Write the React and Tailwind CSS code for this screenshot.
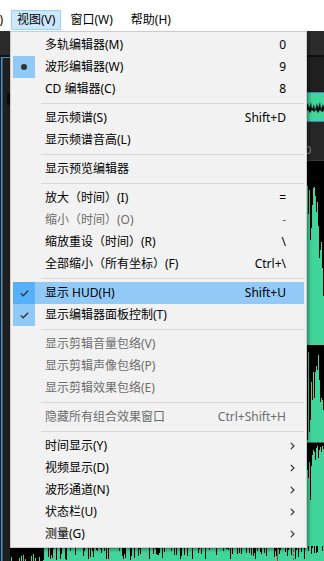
import React from "react";

// ----------------------------------------------------------------------
// menu data

const ROWS = [
  { label: "多轨编辑器(M)", keys: "0" },
  { label: "波形编辑器(W)", keys: "9", mark: "dot" },
  { label: "CD 编辑器(C)", keys: "8" },
  "sep",
  { label: "显示频谱(S)", keys: "Shift+D" },
  { label: "显示频谱音高(L)" },
  "sep",
  { label: "显示预览编辑器" },
  "sep",
  { label: "放大（时间）(I)", keys: "=" },
  { label: "缩小（时间）(O)", keys: "-", disabled: true },
  { label: "缩放重设（时间）(R)", keys: "\\" },
  { label: "全部缩小（所有坐标）(F)", keys: "Ctrl+\\" },
  "sep",
  { label: "显示 HUD(H)", keys: "Shift+U", mark: "check", active: true },
  { label: "显示编辑器面板控制(T)", mark: "check" },
  "sep",
  { label: "显示剪辑音量包络(V)", disabled: true },
  { label: "显示剪辑声像包络(P)", disabled: true },
  { label: "显示剪辑效果包络(E)", disabled: true },
  "sep",
  { label: "隐藏所有组合效果窗口", keys: "Ctrl+Shift+H", disabled: true },
  "sep",
  { label: "时间显示(Y)", sub: true },
  { label: "视频显示(D)", sub: true },
  { label: "波形通道(N)", sub: true },
  { label: "状态栏(U)", sub: true },
  { label: "测量(G)", sub: true },
];

const GREEN = "#41d59c";

function rng(seed) {
  let s = seed;
  return () => {
    s = (s * 16807) % 2147483647;
    return (s - 1) / 2147483646;
  };
}

// waveform bits visible around the menu
const UPPER_TOP = [200, 186, 214, 190, 240, 228, 205, 188, 187, 196, 212, 202, 226, 258, 250, 242, 268, 296];
const MID_TOP = [448, 440, 352, 432, 420, 382, 400, 372, 398, 372, 366, 370, 355, 380, 402, 398, 400, 410];
const LOW_TOP = [490, 470, 478, 462, 500, 466, 455, 450, 452, 460, 448, 446, 458, 450, 447, 452, 446, 449];

const rand = rng(91);
const BOTTOM_SPIKES = [];
for (let x = 43; x < 324; x += 1) {
  const r = rand();
  if (r < 0.38) BOTTOM_SPIKES.push({ x, h: 2 + Math.round(rand() * 12) });
}
const LEFT_SPIKES = [];
for (let x = 11; x < 43; x += 2) {
  const r = rand();
  if (r < 0.5) LEFT_SPIKES.push({ x, h: 2 + Math.round(rand() * 6) });
}

function Backdrop() {
  return (
    <svg width="324" height="530" viewBox="0 31 324 530" className="block">
      <rect x="0" y="31" width="324" height="24" fill="#2b2b2b" />
      <rect x="0" y="55" width="324" height="2" fill="#101010" />
      <rect x="0" y="57" width="324" height="504" fill="#1f1f1f" />
      <rect x="1" y="57" width="1.5" height="504" fill="#4a8fca" />
      <rect x="1" y="57" width="9" height="1" fill="#4a8fca" />
      <rect x="7" y="93" width="3" height="12" fill="#0c0c0c" />

      {/* overview strip */}
      <rect x="306" y="92" width="18" height="1" fill="#3f83c2" />
      <rect x="306" y="93" width="18" height="28" fill={GREEN} />
      <path
        d="M306 106 L308 103 L309 108 L311 102 L312 109 L314 104 L315 110 L317 103 L318 108 L320 102 L321 109 L323 104 L324 107 L324 111 L322 112 L320 110 L318 113 L316 110 L314 112 L312 110 L310 113 L308 110 L306 112 Z"
        fill="#111"
      />
      <rect x="306" y="121" width="18" height="1" fill="#3f83c2" />
      <rect x="306" y="122" width="18" height="38" fill="#262626" />
      <text x="305" y="154" fill="#8c8c8c" fontSize="11" fontFamily="'Noto Sans', sans-serif">
        0
      </text>

      {/* main waveform */}
      <rect x="10" y="160" width="314" height="401" fill="#000" />
      <rect x="10" y="160" width="314" height="1" fill="#3a3a3a" />
      {UPPER_TOP.map((t, i) => (
        <rect key={"u" + i} x={306 + i} y={t} width="1" height={345 - t} fill={GREEN} />
      ))}
      {MID_TOP.map((t, i) => (
        <rect key={"m" + i} x={306 + i} y={t} width="1" height={Math.max(0, 442 - t)} fill={GREEN} />
      ))}
      <rect x="10" y="442" width="314" height="1" fill="#5a5a5a" />
      {LOW_TOP.map((t, i) => (
        <rect key={"l" + i} x={306 + i} y={t} width="1" height={561 - t} fill={GREEN} />
      ))}

      {/* bottom strip below the menu */}
      <rect x="43" y="546" width="263" height="15" fill={GREEN} />
      {BOTTOM_SPIKES.map((s) => (
        <rect key={"b" + s.x} x={s.x} y="546" width="1" height={s.h} fill="#000" />
      ))}
      {LEFT_SPIKES.map((s) => (
        <rect key={"g" + s.x} x={s.x} y={561 - s.h} width="1" height={s.h} fill={GREEN} />
      ))}
      <rect x="277" y="546" width="1" height="15" fill="#c0392b" />
      <line x1="293.5" y1="546" x2="293.5" y2="561" stroke="#c0392b" strokeDasharray="2 2" />
    </svg>
  );
}

function Mark({ type, active }) {
  if (!type) return <div className="w-[22px] h-[22px] shrink-0" />;
  return (
    <div
      className={`w-[22px] h-[22px] shrink-0 flex items-center justify-center ${
        active ? "bg-[#56b0fa]" : "bg-[#90c8f6]"
      }`}
    >
      {type === "dot" ? (
        <div className="w-[6px] h-[6px] rounded-full bg-[#333333]" />
      ) : (
        <svg width="9" height="7" viewBox="0 0 9 7">
          <polyline points="0.8,3.4 3.2,5.8 8.2,0.8" fill="none" stroke="#333" strokeWidth="1.3" />
        </svg>
      )}
    </div>
  );
}

function Chevron() {
  return (
    <svg width="5" height="8" viewBox="0 0 5 8">
      <polyline points="0.8,0.8 4,4 0.8,7.2" fill="none" stroke="#333" strokeWidth="1.2" />
    </svg>
  );
}

function MenuRow({ row }) {
  const color = row.disabled ? "text-[#6d6d6d]" : "text-black";
  return (
    <div className={`flex items-center h-[22px] ${row.active ? "bg-[#91c9f7]" : ""} ${color}`}>
      <Mark type={row.mark} active={row.active} />
      <span className="ml-[10px] flex-1 whitespace-nowrap">{row.label}</span>
      <span className="whitespace-nowrap">{row.keys}</span>
      <div className="w-[18px] flex items-center pl-[4px]">{row.sub && <Chevron />}</div>
    </div>
  );
}

export default function App() {
  return (
    <div
      className="w-[324px] h-[561px] relative overflow-hidden bg-[#1f1f1f] text-[12px] leading-none"
      style={{ fontFamily: "'Noto Sans', 'Noto Sans CJK SC', sans-serif" }}
    >
      {/* menu bar */}
      <div className="h-[31px] bg-white flex items-start pt-[10px] text-black">
        <span className="w-[3px] h-[20px] flex items-center overflow-hidden justify-end">)</span>
        <div className="ml-[8px] h-[20px] px-[5px] flex items-center bg-[#cce8ff] border border-[#99d1ff]">
          视图(V)
        </div>
        <div className="ml-[9px] h-[20px] flex items-center">窗口(W)</div>
        <div className="ml-[18px] h-[20px] flex items-center">帮助(H)</div>
      </div>

      <Backdrop />

      {/* dropdown */}
      <div className="absolute left-[10px] top-[31px] w-[297px] bg-[#f2f2f2] border border-[#cccccc] p-[2px] shadow-[2px_2px_3px_rgba(0,0,0,0.35)]">
        {ROWS.map((row, i) =>
          row === "sep" ? (
            <div key={i} className="ml-[28px] my-[3px] h-px bg-[#d7d7d7]" />
          ) : (
            <MenuRow key={i} row={row} />
          )
        )}
      </div>
    </div>
  );
}
